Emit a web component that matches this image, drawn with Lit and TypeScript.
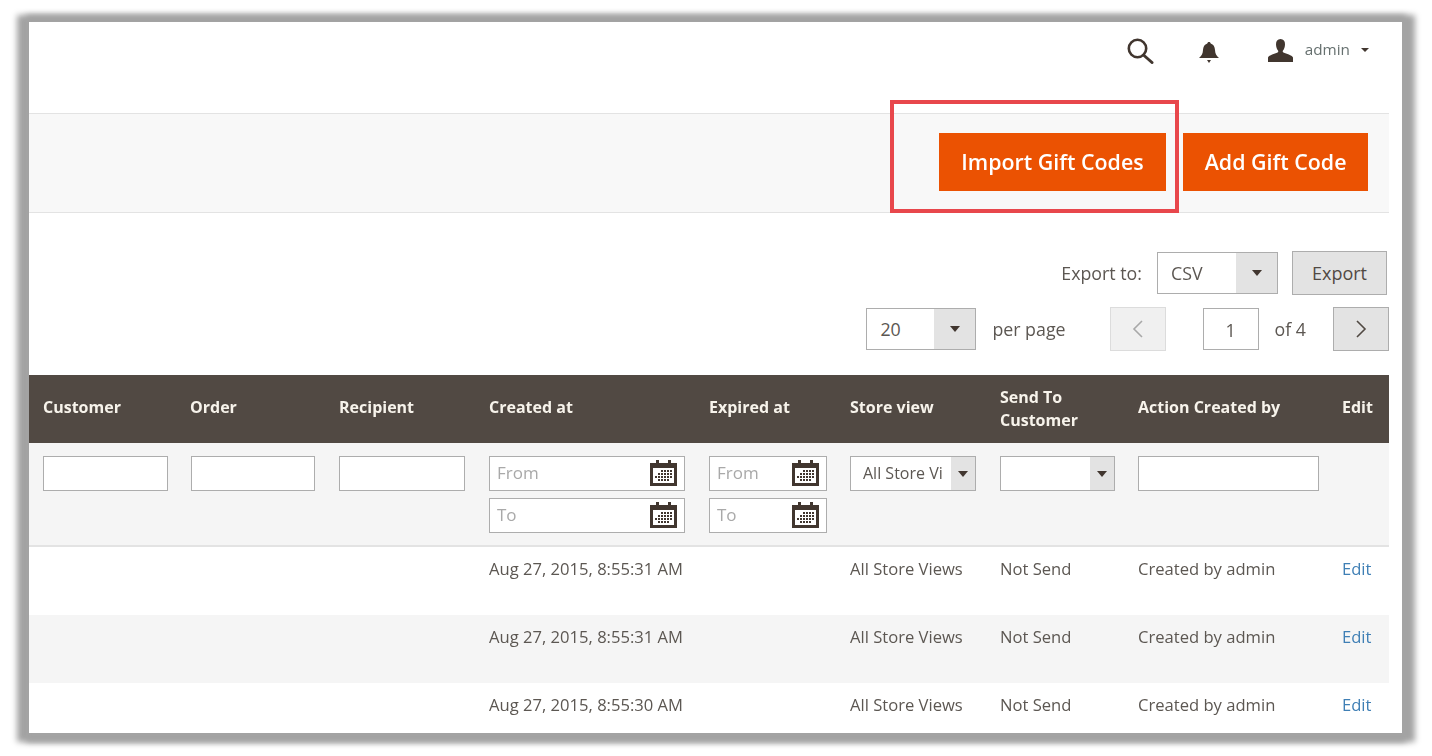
import { LitElement, html, css } from 'lit';
import { customElement } from 'lit/decorators.js';

const COLUMNS = ['Customer', 'Order', 'Recipient', 'Created at', 'Expired at', 'Store view', 'Send To Customer', 'Action Created by', 'Edit'];

const ROWS = [
  'Aug 27, 2015, 8:55:31 AM',
  'Aug 27, 2015, 8:55:31 AM',
  'Aug 27, 2015, 8:55:30 AM',
];

const calendar = html`
  <svg class="cal" viewBox="0 0 27 26" width="27" height="26">
    <path d="M0 3h27v23H0z" fill="#41362f" />
    <rect x="3" y="8" width="21" height="15" fill="#fff" />
    <path d="M6 0h3v5H6zM18 0h3v5h-3z" fill="#41362f" />
    <path d="M11 10h2v2h-2zM14 10h2v2h-2zM17 10h2v2h-2zM20 10h2v2h-2zM8 13h2v2H8zM11 13h2v2h-2zM14 13h2v2h-2zM17 13h2v2h-2zM20 13h2v2h-2zM5 16h2v2H5zM8 16h2v2H8zM11 16h2v2h-2zM14 16h2v2h-2zM17 16h2v2h-2zM20 16h2v2h-2zM8 19h2v2H8zM11 19h2v2h-2zM14 19h2v2h-2zM17 19h2v2h-2z" fill="#41362f" />
  </svg>
`;

@customElement('app-root')
export class AppRoot extends LitElement {
  static styles = css`
    :host {
      display: block;
      width: 1432px;
      height: 756px;
      box-sizing: border-box;
      padding: 22px 30px 23px 29px;
      background: #fff;
      font-family: 'Open Sans', 'Liberation Sans', sans-serif;
      font-size: 16px;
      color: #5c5752;
      overflow: hidden;
    }

    .frame {
      height: 711px;
      box-shadow: 5px 1px 6px 8px #a3a3a3, -4px 1px 6px 8px #a3a3a3;
    }

    .panel {
      position: relative;
      height: 711px;
      background: #fff;
      overflow: hidden;
    }

    .content {
      width: 1360px;
      filter: blur(0.35px);
    }

    .header {
      height: 92px;
      box-sizing: border-box;
      border-bottom: 1px solid #e3e3e3;
      display: flex;
      justify-content: flex-end;
      align-items: flex-start;
      padding: 16px 20px 0 0;
    }

    .header svg {
      display: block;
    }

    .search { margin-right: 45px; }
    .bell { margin: 4px 49px 0 0; }
    .user { margin: 1px 12px 0 0; }

    .admin {
      font-size: 15.3px;
      line-height: 23px;
      margin-right: 11px;
      color: #66706f;
    }

    .caret {
      width: 0;
      height: 0;
      border: 4px solid transparent;
      border-top: 4px solid #41362f;
      border-bottom: 0;
    }

    .admin + .caret { margin-top: 10px; }

    .actions {
      height: 99px;
      box-sizing: border-box;
      background: #f8f8f8;
      border-bottom: 1px solid #e3e3e3;
      display: flex;
      justify-content: flex-end;
      gap: 17px;
      padding: 19px 21px 0 0;
    }

    .primary {
      height: 58px;
      box-sizing: border-box;
      padding: 0 21.5px;
      background: #eb5202;
      color: #fff;
      font-size: 21.4px;
      font-weight: 600;
      line-height: 57px;
      white-space: nowrap;
    }

    .primary.wide { padding: 0 22.5px; }

    .highlight {
      position: absolute;
      left: 861px;
      top: 78px;
      width: 289px;
      height: 113px;
      box-sizing: border-box;
      border: 4px solid #e8474c;
    }

    .toolbar {
      height: 162px;
      box-sizing: border-box;
      padding-top: 38px;
      display: flex;
      flex-direction: column;
      gap: 12px;
      font-size: 17.8px;
    }

    .bar {
      display: flex;
      justify-content: flex-end;
      align-items: center;
    }

    .select {
      display: flex;
      height: 42px;
      box-sizing: border-box;
      border: 1px solid #adadad;
      background: #fff;
      line-height: 40px;
    }

    .select .value {
      flex: 1;
      padding-left: 13px;
      white-space: nowrap;
      overflow: hidden;
    }

    .select .arrow {
      width: 41px;
      background: #e3e3e3;
      display: flex;
      align-items: center;
      justify-content: center;
    }

    .arrow .caret {
      border-width: 6px 5px 0;
      border-top-color: #41362f;
    }

    .btn {
      height: 44px;
      box-sizing: border-box;
      border: 1px solid #adadad;
      background: #e3e3e3;
      line-height: 42px;
      text-align: center;
      font-size: 18px;
      color: #514943;
    }

    .export { width: 95px; margin: 0 2px 0 14px; }
    .export-select { width: 121px; margin-left: 15px; }
    .page-select { width: 110px; }
    .per-page { margin: 0 44px 0 16px; }

    .pager { width: 56px; display: flex; align-items: center; justify-content: center; }
    .pager.off { background: #f0f0f0; border-color: #dcdcdc; }

    .page-input {
      width: 56px;
      height: 42px;
      box-sizing: border-box;
      border: 1px solid #adadad;
      text-align: center;
      line-height: 42px;
      margin: 0 16px 0 37px;
    }

    .of { margin-right: 27px; }

    .grid {
      display: grid;
      grid-template-columns: 147px 149px 150px 220px 141px 150px 138px 204px 61px;
    }

    .head {
      height: 68px;
      box-sizing: border-box;
      padding-bottom: 4px;
      background: #514943;
      color: #f7f3eb;
      font-weight: 700;
      line-height: 23px;
      align-items: center;
    }

    .head > div,
    .filters > div,
    .row > div {
      padding-left: 14px;
      white-space: nowrap;
    }

    .head .wrap { white-space: normal; width: 100px; margin-top: 4px; }

    .filters {
      height: 104px;
      box-sizing: border-box;
      background: #f5f5f5;
      border-bottom: 2px solid #e3e3e3;
      padding-top: 13px;
    }

    .filters input {
      display: block;
      box-sizing: border-box;
      height: 35px;
      border: 1px solid #adadad;
      background: #fff;
      padding: 0 6px 3px 7px;
      margin: 0;
      font: inherit;
      font-size: 17px;
      color: inherit;
    }

    .filters input::placeholder { color: #a9a9a9; opacity: 1; }

    .filters input.shifted { margin-left: 1px; }

    .date {
      position: relative;
      margin-bottom: 7px;
    }

    .cal {
      position: absolute;
      right: 8px;
      top: 4px;
    }

    .filters .select { height: 35px; line-height: 32px; }
    .filters .select .value { padding-left: 12px; }
    .filters .select .arrow { width: 24px; flex: none; }
    .store-select { width: 126px; }
    .send-select { width: 115px; }

    .row {
      height: 68px;
      box-sizing: border-box;
      padding-top: 10px;
      line-height: 24px;
      font-size: 16.6px;
    }

    .row.alt { background: #f5f5f5; }
    .row a { color: #3f7fb5; text-decoration: none; }
  `;

  private select(value: string, cls: string) {
    return html`
      <div class="select ${cls}">
        <div class="value">${value}</div>
        <div class="arrow"><div class="caret"></div></div>
      </div>
    `;
  }

  private dateField(width: number) {
    return html`
      <div class="date" style="width:${width}px">
        <input style="width:${width}px" placeholder="From" />
        ${calendar}
      </div>
      <div class="date" style="width:${width}px">
        <input style="width:${width}px" placeholder="To" />
        ${calendar}
      </div>
    `;
  }

  render() {
    return html`
      <div class="frame">
        <div class="panel">
          <div class="content">
            <div class="header">
              <svg class="search" width="27" height="26" viewBox="0 0 27 26">
                <circle cx="10.500" cy="10.500" r="8.700" fill="none" stroke="#41362f" stroke-width="2.600" />
                <path d="M16.500 17L25 24.500" stroke="#41362f" stroke-width="3" stroke-linecap="round" />
              </svg>
              <svg class="bell" width="20" height="21" viewBox="0 0 20 21">
                <path d="M10 0c1 0 1.600.6 1.700 1.500C14.500 2.300 15.800 4.800 16 8c.2 3.500 1.200 5.500 4 8H0c2.800-2.500 3.800-4.500 4-8 .2-3.200 1.500-5.700 4.300-6.500C8.400.6 9 0 10 0z" fill="#41362f" />
                <path d="M8 18h4l-2 3z" fill="#41362f" />
              </svg>
              <svg class="user" width="25" height="23" viewBox="0 0 25 23">
                <path d="M12.500 0c3 0 4.500 2.200 4.500 5.200 0 2.600-1 5-2 6.400-.5.700-.4 1.600.4 2 3.100 1.500 8.300 2.300 9.600 5V23H0v-4.400c1.300-2.700 6.500-3.500 9.600-5 .8-.4.900-1.300.4-2-1-1.400-2-3.800-2-6.400C8 2.200 9.500 0 12.500 0z" fill="#41362f" />
              </svg>
              <div class="admin">admin</div>
              <div class="caret"></div>
            </div>

            <div class="actions">
              <div class="primary wide">Import Gift Codes</div>
              <div class="primary">Add Gift Code</div>
            </div>

            <div class="toolbar">
              <div class="bar">
                <span>Export to:</span>
                ${this.select('CSV', 'export-select')}
                <div class="btn export">Export</div>
              </div>
              <div class="bar">
                ${this.select('20', 'page-select')}
                <span class="per-page">per page</span>
                <div class="btn pager off">
                  <svg width="12" height="18" viewBox="0 0 12 18"><path d="M10 1L2 9l8 8" fill="none" stroke="#a8a8a8" stroke-width="1.600" /></svg>
                </div>
                <div class="page-input">1</div>
                <span class="of">of 4</span>
                <div class="btn pager">
                  <svg width="12" height="18" viewBox="0 0 12 18"><path d="M2 1l8 8-8 8" fill="none" stroke="#514943" stroke-width="1.600" /></svg>
                </div>
              </div>
            </div>

            <div class="grid head">
              ${COLUMNS.map((c) => html`<div class=${c === 'Send To Customer' ? 'wrap' : ''}>${c}</div>`)}
            </div>

            <div class="grid filters">
              <div><input style="width:125px" /></div>
              <div><input class="shifted" style="width:124px" /></div>
              <div><input style="width:126px" /></div>
              <div>${this.dateField(196)}</div>
              <div>${this.dateField(118)}</div>
              <div>${this.select('All Store Vi', 'store-select')}</div>
              <div>${this.select('', 'send-select')}</div>
              <div><input style="width:181px" /></div>
              <div></div>
            </div>

            ${ROWS.map((created, i) => html`
              <div class="grid row ${i % 2 ? 'alt' : ''}">
                <div></div>
                <div></div>
                <div></div>
                <div>${created}</div>
                <div></div>
                <div>All Store Views</div>
                <div>Not Send</div>
                <div>Created by admin</div>
                <div><a href="#">Edit</a></div>
              </div>
            `)}
          </div>
          <div class="highlight"></div>
        </div>
      </div>
    `;
  }
}
